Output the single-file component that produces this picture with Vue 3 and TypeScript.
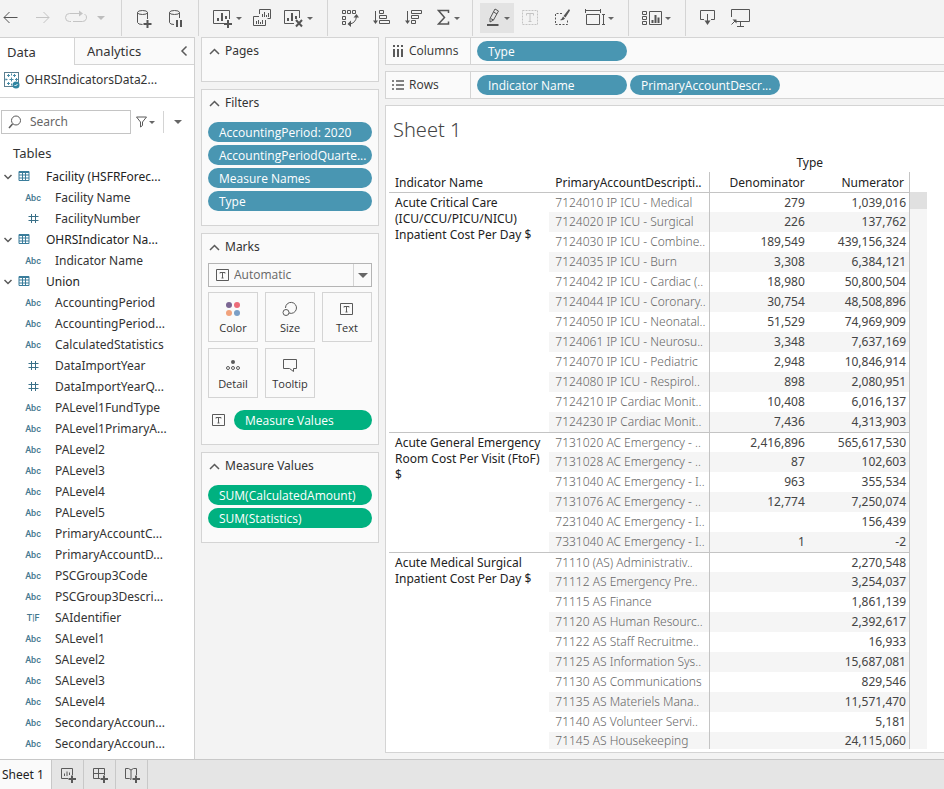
<script setup lang="ts">
import { ref } from 'vue'

type Kind = 'abc' | 'num' | 'bool'
interface Field { name: string; kind: Kind }
interface DataTable { name: string; fields: Field[] }
interface Row { account: string; den: string; num: string }
interface Indicator { name: string; rows: Row[] }

const abc = (name: string): Field => ({ name, kind: 'abc' })
const num = (name: string): Field => ({ name, kind: 'num' })

const tables: DataTable[] = [
  { name: 'Facility (HSFRForec...', fields: [abc('Facility Name'), num('FacilityNumber')] },
  { name: 'OHRSIndicator Na...', fields: [abc('Indicator Name')] },
  {
    name: 'Union',
    fields: [
      abc('AccountingPeriod'), abc('AccountingPeriod...'), abc('CalculatedStatistics'),
      num('DataImportYear'), num('DataImportYearQ...'), abc('PALevel1FundType'),
      abc('PALevel1PrimaryA...'), abc('PALevel2'), abc('PALevel3'), abc('PALevel4'),
      abc('PALevel5'), abc('PrimaryAccountC...'), abc('PrimaryAccountD...'),
      abc('PSCGroup3Code'), abc('PSCGroup3Descri...'), { name: 'SAIdentifier', kind: 'bool' },
      abc('SALevel1'), abc('SALevel2'), abc('SALevel3'), abc('SALevel4'),
      abc('SecondaryAccoun...'), abc('SecondaryAccoun...'),
    ],
  },
]

const row = (account: string, den: string, n: string): Row => ({ account, den, num: n })

const indicators: Indicator[] = [
  {
    name: 'Acute Critical Care (ICU/CCU/PICU/NICU) Inpatient Cost Per Day $',
    rows: [
      row('7124010 IP ICU - Medical', '279', '1,039,016'),
      row('7124020 IP ICU - Surgical', '226', '137,762'),
      row('7124030 IP ICU - Combine..', '189,549', '439,156,324'),
      row('7124035 IP ICU - Burn', '3,308', '6,384,121'),
      row('7124042 IP ICU - Cardiac (..', '18,980', '50,800,504'),
      row('7124044 IP ICU - Coronary..', '30,754', '48,508,896'),
      row('7124050 IP ICU - Neonatal..', '51,529', '74,969,909'),
      row('7124061 IP ICU - Neurosu..', '3,348', '7,637,169'),
      row('7124070 IP ICU - Pediatric', '2,948', '10,846,914'),
      row('7124080 IP ICU - Respirol..', '898', '2,080,951'),
      row('7124210 IP Cardiac Monit..', '10,408', '6,016,137'),
      row('7124230 IP Cardiac Monit..', '7,436', '4,313,903'),
    ],
  },
  {
    name: 'Acute General Emergency Room Cost Per Visit (FtoF) $',
    rows: [
      row('7131020 AC Emergency - ..', '2,416,896', '565,617,530'),
      row('7131028 AC Emergency - ..', '87', '102,603'),
      row('7131040 AC Emergency - I..', '963', '355,534'),
      row('7131076 AC Emergency - ..', '12,774', '7,250,074'),
      row('7231040 AC Emergency - I..', '', '156,439'),
      row('7331040 AC Emergency - I..', '1', '-2'),
    ],
  },
  {
    name: 'Acute Medical Surgical Inpatient Cost Per Day $',
    rows: [
      row('71110 (AS) Administrativ..', '', '2,270,548'),
      row('71112 AS Emergency Pre..', '', '3,254,037'),
      row('71115 AS Finance', '', '1,861,139'),
      row('71120 AS Human Resourc..', '', '2,392,617'),
      row('71122 AS Staff Recruitme..', '', '16,933'),
      row('71125 AS Information Sys..', '', '15,687,081'),
      row('71130 AS Communications', '', '829,546'),
      row('71135 AS Materiels Mana..', '', '11,571,470'),
      row('71140 AS Volunteer Servi..', '', '5,181'),
      row('71145 AS Housekeeping', '', '24,115,060'),
    ],
  },
]

const filters = ['AccountingPeriod: 2020', 'AccountingPeriodQuarte...', 'Measure Names', 'Type']
const rowPills = ['Indicator Name', 'PrimaryAccountDescr...']
const measures = ['SUM(CalculatedAmount)', 'SUM(Statistics)']
const markType = ref('Automatic')
const search = ref('')
</script>

<template>
  <div class="app">
    <header class="toolbar">
      <div class="group nav">
        <button aria-label="Undo"><svg width="16" height="20" viewBox="0 0 16 20"><path class="s" d="M1 9.500H14.500M6.500 4L1 9.500L6.500 15" /></svg></button>
        <button class="off" aria-label="Redo"><svg width="16" height="20" viewBox="0 0 16 20"><path class="s" d="M1 9.500H14M8.500 4L14 9.500L8.500 15" /></svg></button>
        <button class="off split" aria-label="Replay"><svg width="22" height="20" viewBox="0 0 22 20"><path class="s" d="M6 13.500H4.500a4 4 0 0 1 0-8H15M8 13.500H17.500a4 4 0 0 0 2-7.500" /><path class="f" d="M14 2.500L18 5.500L14 8.500z" /></svg><i class="caret wide"></i></button>
      </div>
      <div class="group data">
        <button aria-label="New data source"><svg width="17" height="20" viewBox="0 0 17 20"><ellipse class="s" cx="6.500" cy="4.500" rx="5" ry="2" /><path class="s" d="M1.500 4.500V14.500Q2 16.500 6.500 16.500M11.500 4.500V11" /><path class="b" d="M11.500 12V20M7.500 16H15.500" /></svg></button>
        <button aria-label="Pause updates"><svg width="17" height="20" viewBox="0 0 17 20"><ellipse class="s" cx="6.500" cy="4.500" rx="5" ry="2" /><path class="s" d="M1.500 4.500V14.500Q2 16.500 6 16.500M11.500 4.500V10" /><path class="b" d="M9 12V19M13 12V19" /></svg></button>
      </div>
      <div class="group sheets">
        <button class="split" aria-label="New worksheet"><svg width="20" height="20" viewBox="0 0 20 20"><path class="s" d="M11 15.500H.5V2.500H16.500V11" /><path class="b" d="M5 10V13M9 5V13M13 8V11M15 12V20M11 16H19" /></svg><i class="caret"></i></button>
        <button aria-label="Duplicate"><svg width="20" height="20" viewBox="0 0 20 20"><path class="s" d="M6.500 6V1.500H17.500V10.500H14.500M6 8.500H.5V17.500H12.500V12" /><path class="s" d="M9.500 6V9M11.500 4V9M13.500 7V9M15.500 5V9M3.500 13V16M5.500 12V16M7.500 14V16M9.500 12V16" /></svg></button>
        <button class="split" aria-label="Clear sheet"><svg width="20" height="20" viewBox="0 0 20 20"><path class="s" d="M10 15.500H.5V2.500H15.500V10" /><path class="b" d="M4 10V13M8 5V13M12 8V11M12 12L18 18.500M18 12L12 18.500" /></svg><i class="caret"></i></button>
      </div>
      <div class="group sort">
        <button aria-label="Swap rows and columns"><svg width="18" height="20" viewBox="0 0 18 20"><path class="s" d="M1.500 2.500h3v3h-3zM6.500 2.500h3v3h-3zM11.500 2.500h3v3h-3zM1.500 8.500h3v3h-3zM1.500 13.500h3v3h-3zM8 16Q15 15.500 15.500 8" /><path class="f" d="M12.500 9.500L15.500 6L18 9.500zM10 12.500L6.500 16L10 19z" /></svg></button>
        <button aria-label="Sort ascending"><svg width="18" height="20" viewBox="0 0 18 20"><path class="s" d="M2.500 3V14M6.500 2.500H10.500V5.500H6.500zM6.500 7.500H13.500V10.500H6.500zM6.500 12.500H16.500V15.500H6.500z" /><path class="f" d="M0 12.500H5L2.500 16z" /></svg></button>
        <button aria-label="Sort descending"><svg width="18" height="20" viewBox="0 0 18 20"><path class="s" d="M2.500 3V14M6.500 2.500H16.500V5.500H6.500zM6.500 7.500H13.500V10.500H6.500zM6.500 12.500H10.500V15.500H6.500z" /><path class="f" d="M0 12.500H5L2.500 16z" /></svg></button>
        <button class="split" aria-label="Totals"><svg width="14" height="20" viewBox="0 0 14 20"><path class="m" d="M11.500 5V2.500H1.500L7.500 9.500L1.500 16H11.500V13.500" /></svg><i class="caret"></i></button>
      </div>
      <div class="group format">
        <button class="split on" aria-label="Highlight"><svg width="15" height="20" viewBox="0 0 15 20"><path class="s" d="M4 10.500L9 1L12.500 3L7.500 12L4 14zM4.500 10.500L7.500 12M7.500 4L11 6" /><path class="b" d="M1 17H12.500" /></svg><i class="caret"></i></button>
        <button class="off" aria-label="Show mark labels"><svg width="18" height="20" viewBox="0 0 18 20"><rect class="s" x="1.500" y="2.500" width="15" height="14" stroke-dasharray="2 1" /><path class="s" d="M5.500 7.500V5.500H12.500V7.500M9 5.500V13.500M7.500 13.500H10.500" /></svg></button>
        <button aria-label="Format"><svg width="18" height="20" viewBox="0 0 18 20"><path class="s" stroke-dasharray="2 1.500" d="M9 5.500H2.500V16.500H14.500V11" /><path class="f" d="M16 1L17 2.500L12.500 9.500L10.500 8zM10 8.500L12 10.500Q10 13 7 12Q9 11 10 8.500z" /></svg></button>
        <button class="split" aria-label="Fit"><svg width="20" height="20" viewBox="0 0 20 20"><path class="s" d="M.5 1V5M15.500 1V5M1 2.500H15M1.500 6.500H14.500V16.500H1.500zM18.500 6V17M17 6.500H20M17 16.500H20" /></svg><i class="caret"></i></button>
      </div>
      <div class="group show">
        <button class="split" aria-label="Show me"><svg width="20" height="20" viewBox="0 0 20 20"><path class="s" d="M.5 3.500h4v3h-4zM.5 8.500h4v3h-4zM.5 13.500h4v3h-4zM7.500 3.500H19.500V16.500H7.500z" /><path class="b" d="M10.500 12V15M13.500 7V15M16.500 9.500V15" /></svg><i class="caret"></i></button>
      </div>
      <div class="group present">
        <button aria-label="Download"><svg width="18" height="20" viewBox="0 0 18 20"><path class="s" d="M5 11.500H1.500V2.500H15.500V11.500H12M8.500 6V14" /><path class="f" d="M5.500 12.500H11.500L8.500 17z" /></svg></button>
        <button aria-label="Presentation mode"><svg width="20" height="20" viewBox="0 0 20 20"><path class="s" d="M1.500 9V1.500H19.500V13.500H6M10.500 14V18M7 18.500H14M1.500 16.500L5 13" /><path class="f" d="M2.500 11.500H6.500V15.500z" /></svg></button>
      </div>
    </header>

    <div class="work">
      <aside class="pane">
        <div class="tabs">
          <button class="tab active">Data</button>
          <button class="tab">Analytics
            <svg width="8" height="12" viewBox="0 0 8 12"><path class="m" d="M6.500 1.500L2 6L6.500 10.500" /></svg>
          </button>
        </div>
        <div class="source">
          <svg width="16" height="17" viewBox="0 0 16 17"><rect x=".5" y=".5" width="14" height="14" fill="#fff" stroke="#5b7f90" /><path stroke="#4a8ca6" fill="none" d="M7.500 5.500v4M5.500 7.500h4M4.500 2v3M3 3.500h3M10.500 2v3M9 3.500h3M4.500 10v3M3 11.500h3M2 6.500v2M1.500 7.500h2M12.500 6v3M11 7.500h3M7.500 1.500v2M7.500 11.500v2" /><circle cx="12" cy="13" r="3.500" fill="#2f85a2" /><path d="M10.500 13l1 1l2-2" stroke="#fff" fill="none" /></svg>
          <span>OHRSIndicatorsData2...</span>
        </div>
        <div class="find">
          <label class="box">
            <svg width="14" height="14" viewBox="0 0 14 14"><circle class="s" cx="8" cy="5.500" r="4.500" /><path class="m" d="M4.500 9L1 13" /></svg>
            <input v-model="search" type="text" placeholder="Search" aria-label="Search fields" />
          </label>
          <button class="filter" aria-label="Filter fields"><svg width="12" height="12" viewBox="0 0 12 12"><path class="s" d="M.5 1H10.500L6.500 6V9.500L4.500 11V6z" /></svg><i class="caret"></i></button>
          <button class="more" aria-label="More options"><i class="caret wide"></i></button>
        </div>
        <h2>Tables</h2>
        <ul class="tree">
          <li v-for="table in tables" :key="table.name">
            <button class="table-name">
              <svg width="10" height="8" viewBox="0 0 10 8"><path class="m" d="M1.500 2L5 5.500L8.500 2" /></svg>
              <svg width="12" height="11" viewBox="0 0 12 11"><path fill="none" stroke="#3a7d9b" d="M1 .5H11V9.500H1zM1 4H11M1 7H11M4.500 2V9.500M7.500 2V9.500" /><path stroke="#3a7d9b" d="M1 1.500H11" /></svg>
              <span>{{ table.name }}</span>
            </button>
            <ul>
              <li v-for="(field, i) in table.fields" :key="i" class="field">
                <span class="kind">
                  <template v-if="field.kind === 'abc'">Abc</template>
                  <svg v-else-if="field.kind === 'num'" width="11" height="11" viewBox="0 0 11 11"><path fill="none" stroke="#3a7088" d="M3.500 1V10M7.500 1V10M.5 3.500H10.500M.5 7.500H10.500" /></svg>
                  <template v-else>T|F</template>
                </span>
                <span>{{ field.name }}</span>
              </li>
            </ul>
          </li>
        </ul>
      </aside>

      <section class="cards">
        <div class="card pages">
          <h3><svg width="11" height="7" viewBox="0 0 11 7"><path class="m" d="M1 6L5.500 1.500L10 6" /></svg>Pages</h3>
        </div>
        <div class="card filters">
          <h3><svg width="11" height="7" viewBox="0 0 11 7"><path class="m" d="M1 6L5.500 1.500L10 6" /></svg>Filters</h3>
          <div class="stack">
            <button v-for="f in filters" :key="f" class="pill">{{ f }}</button>
          </div>
        </div>
        <div class="card marks">
          <h3><svg width="11" height="7" viewBox="0 0 11 7"><path class="m" d="M1 6L5.500 1.500L10 6" /></svg>Marks</h3>
          <div class="picker">
            <svg width="13" height="12" viewBox="0 0 13 12"><path class="s" d="M.5 .5H12.500V11.500H.5zM4 4.500V3.500H9V4.500M6.500 3.500V9M5.500 9H7.500" /></svg>
            <select v-model="markType" aria-label="Mark type"><option>Automatic</option></select>
            <span class="drop"><i class="caret big"></i></span>
          </div>
          <div class="tiles">
            <button class="tile"><svg width="18" height="16" viewBox="0 0 18 16"><circle cx="5" cy="4" r="3" fill="#7b6793" /><circle cx="13" cy="4" r="3" fill="#ec6c79" /><circle cx="5" cy="12" r="3" fill="#f1a27c" /><circle cx="13" cy="12" r="3" fill="#7b9fc6" /></svg>Color</button>
            <button class="tile"><svg width="18" height="16" viewBox="0 0 18 16"><path class="s" d="M4.500 7A5.500 5.500 0 1 1 8 12" /><circle class="s" cx="5" cy="11.500" r="3" /></svg>Size</button>
            <button class="tile"><svg width="18" height="16" viewBox="0 0 18 16"><path class="s" d="M2.500 2.500H14.500V13.500H2.500zM6 6.500V5.500H11V6.500M8.500 5.500V11M7.500 11H9.500" /></svg>Text</button>
            <button class="tile"><svg width="18" height="16" viewBox="0 0 18 16"><circle class="f" cx="9" cy="5" r="2" /><circle class="s" cx="4" cy="11" r="1.500" /><circle class="s" cx="9" cy="11" r="1.500" /><circle class="s" cx="14" cy="11" r="1.500" /></svg>Detail</button>
            <button class="tile"><svg width="18" height="16" viewBox="0 0 18 16"><path class="s" d="M2.500 2.500H15.500V11.500H12.500V14.500L8.500 11.500H2.500z" /></svg>Tooltip</button>
          </div>
          <div class="encoding">
            <svg width="13" height="12" viewBox="0 0 13 12"><path class="s" d="M.5 .5H12.500V11.500H.5zM4 4.500V3.500H9V4.500M6.500 3.500V9M5.500 9H7.500" /></svg>
            <button class="pill green">Measure Values</button>
          </div>
        </div>
        <div class="card values">
          <h3><svg width="11" height="7" viewBox="0 0 11 7"><path class="m" d="M1 6L5.500 1.500L10 6" /></svg>Measure Values</h3>
          <div class="stack">
            <button v-for="m in measures" :key="m" class="pill green">{{ m }}</button>
          </div>
        </div>
      </section>

      <main class="sheet">
        <div class="shelf">
          <div class="shelf-name"><svg width="12" height="12" viewBox="0 0 12 12"><path class="b" d="M2 0V2M2 4V12M6 0V2M6 4V12M10 0V2M10 4V12" /></svg>Columns</div>
          <div class="shelf-pills"><button class="pill">Type</button></div>
        </div>
        <div class="shelf">
          <div class="shelf-name"><svg width="12" height="12" viewBox="0 0 12 12"><path class="m" d="M0 2H2M4 2H12M0 6H2M4 6H12M0 10H2M4 10H12" /></svg>Rows</div>
          <div class="shelf-pills"><button v-for="p in rowPills" :key="p" class="pill">{{ p }}</button></div>
        </div>
        <div class="canvas">
          <h1>Sheet 1</h1>
          <div class="view">
            <table>
              <colgroup><col class="c-wide" /><col class="c-wide" /><col class="c-num" /><col class="c-num" /></colgroup>
              <thead>
                <tr><td colspan="2"></td><th colspan="2" class="type">Type</th></tr>
                <tr>
                  <th>Indicator Name</th>
                  <th class="edge">PrimaryAccountDescripti..</th>
                  <th class="n">Denominator</th>
                  <th class="n edge">Numerator</th>
                </tr>
              </thead>
              <tbody v-for="ind in indicators" :key="ind.name">
                <tr v-for="(r, i) in ind.rows" :key="r.account">
                  <th v-if="i === 0" class="ind" :rowspan="ind.rows.length">{{ ind.name }}</th>
                  <td class="acct edge">{{ r.account }}</td>
                  <td class="n">{{ r.den }}</td>
                  <td class="n edge">{{ r.num }}</td>
                </tr>
              </tbody>
            </table>
            <div class="track"><div class="thumb"></div></div>
          </div>
        </div>
      </main>
    </div>

    <footer class="bottom">
      <button class="sheet-tab">Sheet 1</button>
      <button class="new" aria-label="New worksheet"><svg width="18" height="18" viewBox="0 0 18 18"><path class="s" d="M9 12.500H2.500V2.500H13.500V9M5.500 7.500V10M8 5.500V10M10.500 6.500V9" /><path class="b" d="M13 9.500V17M9.500 13H17" /></svg></button>
      <button class="new" aria-label="New dashboard"><svg width="18" height="18" viewBox="0 0 18 18"><path class="s" d="M9 12.500H2.500V2.500H13.500V9M2.500 7.500H13.500M7.500 2.500V12.500" /><path class="b" d="M13 9.500V17M9.500 13H17" /></svg></button>
      <button class="new" aria-label="New story"><svg width="18" height="18" viewBox="0 0 18 18"><path class="s" d="M8 13.500L6.500 12.500H2.500V2.500H5.500L8 4L10.500 2.500H13.500V9M8 4V13.500" /><path class="b" d="M13 9.500V17M9.500 13H17" /></svg></button>
    </footer>
  </div>
</template>

<style>
body { margin: 0; }
</style>

<style scoped>
* { box-sizing: border-box; }
.app {
  display: flex; flex-direction: column; height: 100vh; overflow: hidden;
  background: #f3f3f3; color: #333; font: 12px/20px "Open Sans", "Noto Sans", sans-serif;
}
button { margin: 0; padding: 0; border: 0; background: none; color: inherit; font: inherit; text-align: left; white-space: nowrap; }
h1, h2, h3, ul { margin: 0; padding: 0; font-weight: 400; list-style: none; }
svg { flex: none; display: block; color: #5a5a5a; }
.s { fill: none; stroke: currentColor; stroke-width: 1; }
.m { fill: none; stroke: currentColor; stroke-width: 1.500; }
.b { fill: none; stroke: currentColor; stroke-width: 2; }
.f { fill: currentColor; }
.caret { flex: none; width: 0; height: 0; border: 3px solid transparent; border-top-color: #666; border-bottom: 0; }
.caret.wide { border-width: 4px 4px 0; }
.caret.big { border-width: 5px 5px 0; }

.toolbar { display: flex; flex: none; height: 37px; padding-bottom: 1px; }
.group { display: flex; align-items: center; border-right: 1px solid #d4d4d4; }
.group button { display: flex; align-items: center; }
.group svg { color: #555; }
.group .off svg { color: #c4c4c4; }
.off .caret { border-top-color: #bdbdbd; }
.split { gap: 3px; }
.nav { gap: 16px; padding: 0 16px 0 3px; }
.nav .split { gap: 10px; margin-left: -2px; }
.data { gap: 15px; padding: 0 13px 0 14px; }
.sheets { gap: 11px; padding: 0 14px; }
.sort { gap: 14px; padding: 0 12px 0 13px; }
.format { gap: 7px; padding: 0 14px 0 7px; }
.format button + button + button { margin-left: 7px; }
.on { height: 30px; padding: 0 4px 0 6px; background: #e3e3e3; }
.show { padding: 0 14px 0 13px; }
.present { gap: 13px; padding: 0 13px; border: 0; }

.work { display: flex; flex: 1; min-height: 0; }
.pane { display: flex; flex-direction: column; flex: none; width: 195px; background: #fff; border: solid #d0d0d0; border-width: 1px 1px 0 0; font-family: "Noto Sans", "Open Sans", sans-serif; overflow: hidden; }
.tabs { display: flex; flex: none; height: 27px; font-size: 13px; }
.tab { display: flex; align-items: center; justify-content: space-between; flex: 1; padding: 0 6px 0 12px; background: #fafafa; border: solid #d4d4d4; border-width: 0 0 1px 1px; }
.tab.active { flex: none; width: 74px; padding: 0 7px; border: 0; background: #fff; }
.source { display: flex; align-items: center; flex: none; gap: 5px; height: 33px; padding: 0 4px 2px; border-bottom: 1px solid #d4d4d4; white-space: nowrap; }
.find { display: flex; align-items: center; flex: none; padding: 12px 8px 8px 1px; }
.box { display: flex; align-items: center; gap: 8px; width: 130px; height: 24px; padding: 0 6px; border: 1px solid #c4c4c4; }
.box input { width: 100%; min-width: 0; padding: 0; border: 0; outline: 0; background: none; color: #333; font: inherit; }
.box input::placeholder { color: #666; opacity: 1; }
.filter { display: flex; align-items: center; gap: 1px; height: 22px; margin-left: 5px; }
.more { display: flex; align-items: center; height: 22px; margin-left: 8px; padding-left: 10px; border-left: 1px solid #d4d4d4; }
h2 { flex: none; padding: 1px 13px 3px; font-size: 13px; }
.table-name { display: flex; align-items: center; height: 21px; color: #222; }
.table-name svg:first-child { margin: 0 5px 0 3px; }
.table-name span { margin-left: 16px; }
.field { display: flex; align-items: center; height: 21px; white-space: nowrap; }
.kind { display: flex; justify-content: center; flex: none; width: 22px; margin: 0 11px 0 22px; color: #44788f; font: 500 9px/20px Roboto, "Open Sans", sans-serif; }

.cards { display: flex; flex-direction: column; flex: none; gap: 7px; width: 178px; margin-left: 6px; }
.card { padding: 0 6px 14px; background: #fafafa; border: 1px solid #d4d4d4; }
.card.pages { padding-bottom: 17px; }
h3 { display: flex; align-items: center; gap: 5px; height: 26px; padding-left: 1px; font: 12px/20px "Noto Sans", "Open Sans", sans-serif; }
.stack { display: flex; flex-direction: column; gap: 3px; padding-top: 6px; }
.pill { height: 20px; padding: 1px 6px 0 11px; border-radius: 10px; background: #4996b2; color: #fff; line-height: 18px; overflow: hidden; }
.pill.green { background: #00b180; }
.picker { position: relative; display: flex; align-items: center; height: 24px; margin-top: 3px; border: 1px solid #b4b4b4; }
.picker svg { position: absolute; left: 7px; pointer-events: none; }
.picker select { flex: 1; height: 22px; padding: 0 0 0 25px; border: 0; outline: 0; appearance: none; background: none; color: #666; font: inherit; }
.drop { position: absolute; right: 0; display: flex; align-items: center; justify-content: center; width: 18px; height: 22px; border-left: 1px solid #d4d4d4; pointer-events: none; }
.tiles { display: grid; grid-template-columns: repeat(3, 50px); gap: 6px 7px; margin-top: 5px; }
.tile { display: flex; flex-direction: column; align-items: center; height: 50px; padding-top: 8px; border: 1px solid #d4d4d4; font-size: 11px; line-height: 22px; }
.encoding { display: flex; align-items: center; gap: 9px; margin-top: 12px; padding-left: 4px; }
.encoding .pill { flex: 1; }

.sheet { display: flex; flex-direction: column; flex: 1; gap: 6px; min-width: 0; margin: 0 0 6px 6px; }
.shelf { display: flex; flex: none; height: 28px; background: #fafafa; border: solid #d4d4d4; border-width: 1px 0 1px 1px; }
.shelf-name { display: flex; align-items: center; gap: 5px; width: 85px; padding-left: 6px; border-right: 1px solid #d4d4d4; }
.shelf-pills { display: flex; align-items: center; gap: 3px; padding-left: 6px; }
.shelf .pill { width: 150px; }
.canvas { display: flex; flex-direction: column; flex: 1; min-height: 0; padding: 0 3px 3px; background: #fff; border: solid #d4d4d4; border-width: 1px 0 1px 1px; font-family: "Noto Sans", "Open Sans", sans-serif; }
h1 { flex: none; height: 46px; padding: 10px 4px 0; color: #444; font: 300 20px/28px "Noto Sans", "Open Sans", sans-serif; }
.view { display: flex; flex: 1; min-height: 0; overflow: hidden; }
table { flex: none; align-self: flex-start; width: 521px; table-layout: fixed; border-collapse: separate; border-spacing: 0; }
.c-wide { width: 160px; }
.c-num { width: 100px; }
th, td { height: 20px; padding: 0 6px; font-weight: 400; line-height: 18px; text-align: left; white-space: nowrap; overflow: hidden; }
thead th { padding-top: 2px; color: #222; }
.type { text-align: center; }
.n, thead .n { padding-right: 5px; text-align: right; }
.edge { padding-right: 3px; border-right: 1px solid #c4c4c4; }
td.n { color: #444; }
.acct { color: #666; font-weight: 300; }
.ind { color: #222; line-height: 16px; vertical-align: top; white-space: normal; padding: 2px 4px 0 6px; }
tbody tr:first-child > * { border-top: 1px solid #c4c4c4; }
tbody tr:nth-child(even) td { background: #f5f5f5; }
tbody:last-child tr:last-child td { height: 17px; line-height: 17px; }
.track { flex: none; width: 17px; margin-top: 40px; background: #f5f5f5; }
.thumb { height: 17px; background: #e0e0e0; }

.bottom { display: flex; flex: none; height: 30px; background: #e5e5e5; border-top: 1px solid #c8c8c8; }
.sheet-tab { width: 52px; padding-left: 2px; background: #fafafa; border-right: 1px solid #c8c8c8; color: #222; font-family: "Noto Sans", "Open Sans", sans-serif; }
.new { display: flex; align-items: center; justify-content: center; width: 32px; border-right: 1px solid #c8c8c8; }
</style>
